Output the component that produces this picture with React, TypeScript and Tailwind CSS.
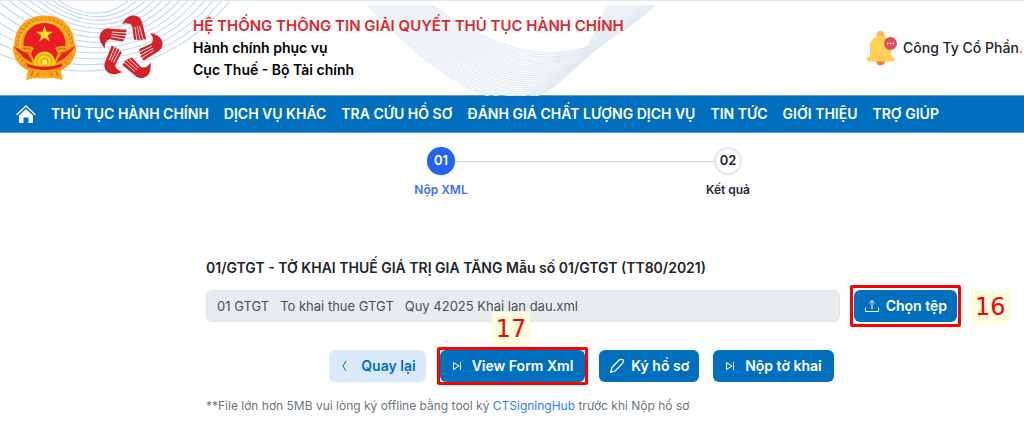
import { useState } from 'react';

const NAV_ITEMS = [
  'THỦ TỤC HÀNH CHÍNH',
  'DỊCH VỤ KHÁC',
  'TRA CỨU HỒ SƠ',
  'ĐÁNH GIÁ CHẤT LƯỢNG DỊCH VỤ',
  'TIN TỨC',
  'GIỚI THIỆU',
  'TRỢ GIÚP',
];

const PRIMARY_BTN =
  'flex h-8 items-center rounded-md bg-[#0070be] text-sm font-semibold text-white hover:bg-[#005fa3]';

const mix = (a: number[], b: number[], t: number) => a.map((v, i) => v + (b[i] - v) * t);
const toPath = (p: number[]) => `M${p[0]} ${p[1]}C${p.slice(2).join(' ')}`;

function Waves() {
  const left = Array.from({ length: 13 }, (_, i) =>
    toPath(mix([-10, 49, 60, 80, 158, 86, 230, 0], [-10, -85, 40, 6, 90, 30, 128, 0], i / 12)),
  );
  const right = Array.from({ length: 24 }, (_, i) =>
    toPath(mix([368, 4, 470, 112, 552, 148, 607, 4], [432, 4, 510, 60, 580, 75, 655, 4], i / 23)),
  );
  return (
    <svg className="absolute left-0 top-0" width="700" height="95" fill="none" aria-hidden="true">
      {left.map((d, i) => (
        <path key={i} d={d} stroke="#c3d8e8" strokeWidth="1.100" />
      ))}
      {right.map((d, i) => (
        <path key={i} d={d} stroke="#e3ebf3" strokeWidth="1.200" />
      ))}
    </svg>
  );
}

function Emblem() {
  const rays = Array.from({ length: 40 }, (_, i) => i * 9);
  return (
    <svg width="66" height="66" viewBox="0 0 66 66" aria-hidden="true">
      <path d="M17 48L14 65.500C20 62.500 25 63.500 32.500 63.500C40 63.500 45 62.500 50.500 65.500L48 48Z" fill="#fba919" />
      <path d="M32.500 0.500C14 0.500 4 13 3 25C2.500 29 1 31 1 35C2 45 9 53 16 55H49C56 53 63 45 64 35C64 31 62.500 29 62 25C61 13 51 0.500 32.500 0.500Z" fill="#f9a31a" />
      {rays.map((r) => (
        <path
          key={r}
          d="M32.500 2.500C34.500 3.500 34.500 5 33 7"
          stroke="#ef6a1b"
          strokeWidth="0.900"
          fill="none"
          transform={`rotate(${r} 32.500 31)`}
        />
      ))}
      <ellipse cx="32.500" cy="30" rx="24.500" ry="23.500" stroke="#ffd21f" strokeWidth="1.300" fill="none" />
      <ellipse cx="32.500" cy="28.500" rx="21" ry="20.500" fill="#ec1c24" />
      <path d="M32.500 10.500L34.500 16.800H41L35.800 20.500L37.800 26.500L32.500 22.800L27.200 26.500L29.200 20.500L24 16.800H30.500Z" fill="#ffe41c" />
      <path d="M8 33C13 30 19 31 22 33L19 38L23 48H42L46 38L43 33C46 31 52 30 57 33L50 50C44 54 21 54 15 50Z" fill="#f9a51a" />
      <path
        d="M11 34C14 33 17 33 19 35M12 38C14 37 16 37 18 39M14 42C16 41 18 42 20 44M54 34C51 33 48 33 46 35M53 38C51 37 49 37 47 39M51 42C49 41 47 42 45 44"
        stroke="#e8551d"
        strokeWidth="1.100"
        fill="none"
      />
      <path d="M1 31L16 39L21 48L12 43ZM64 31L49 39L44 48L53 43Z" fill="#e2241d" />
      <circle cx="32.500" cy="47" r="10.500" fill="#ffd91d" />
      <circle cx="32.500" cy="47" r="7.500" stroke="#f39a1b" strokeWidth="1.300" fill="none" />
      <circle cx="32.500" cy="47" r="3.500" stroke="#f39a1b" strokeWidth="1.300" fill="#ffef5a" />
      <path d="M14 48C25 53 40 53 51 48L47 57C38 60 27 60 18 57Z" fill="#f9a51a" />
      <path d="M14 48C25 53 40 53 51 48L49 52C38 56 27 56 16 52Z" fill="#e3221f" />
      <path d="M19 61L21 56M25 61L26 58M40 61L39 58M46 61L44 56" stroke="#e8551d" strokeWidth="1.200" />
    </svg>
  );
}

function HandsLogo() {
  return (
    <svg width="66" height="70" viewBox="-34 -36 68 72" aria-hidden="true">
      {[0, 72, 144, 216, 288].map((r) => (
        <g key={r} transform={`rotate(${r})`}>
          <path
            d="M-8.500 -24.500C-6.500 -27 -4 -32.500 2 -33.500C8 -34 11.500 -31 12.500 -26L16.500 -10C16.500 -8.500 15 -8 14 -9.500C13.500 -7.500 11 -7.500 10.500 -9C10 -7.500 7.500 -7.500 7 -9C6.500 -8 4.500 -8 4 -9.500L2.500 -21C2 -25.500 -3.500 -26.500 -8.500 -24.500Z"
            fill="#d2232a"
          />
          <path d="M5 -22L7 -8.500M7.500 -22.500L10.300 -8.500M10 -22.500L13.500 -8.500" stroke="#fff" strokeWidth="0.800" fill="none" />
        </g>
      ))}
    </svg>
  );
}

function Bell() {
  return (
    <svg width="31" height="35" viewBox="0 0 31 35" aria-hidden="true">
      <circle cx="14.500" cy="4" r="4" fill="#ffb74f" />
      <circle cx="14.500" cy="30" r="4.500" fill="#f0823c" />
      <path d="M14.500 5C7.500 5 4 10 4 16V24C4 26 0.500 26 0.500 28.500C0.500 30 1.500 30.500 2.500 30.500H26.500C27.500 30.500 28.500 30 28.500 28.500C28.500 26 25 26 25 24V16C25 10 21.500 5 14.500 5Z" fill="#ffd054" />
      <circle cx="24.500" cy="12.500" r="6.500" fill="#e54d5e" />
      <path d="M21 12.500H22.500M23.800 12.500H25.300M26.600 12.500H28" stroke="#fff" strokeWidth="1.300" />
    </svg>
  );
}

function HomeIcon() {
  return (
    <svg width="20" height="20" viewBox="0 0 20 20" aria-hidden="true">
      <path d="M1 10.500L10 2L19 10.500" stroke="#fff" strokeWidth="1.300" fill="none" strokeLinecap="round" />
      <path d="M10 5L17 11.500V17.500C17 18.500 16.500 19 15.500 19H12.500V13.500H7.500V19H4.500C3.500 19 3 18.500 3 17.500V11.500Z" fill="#fff" />
    </svg>
  );
}

function UploadIcon() {
  return (
    <svg width="16" height="16" viewBox="0 0 16 16" fill="none" stroke="currentColor" aria-hidden="true">
      <path d="M8 11V2.500M5 5.500L8 2.500L11 5.500M1.500 9.500V13.500H14.500V9.500" />
    </svg>
  );
}

function SkipIcon() {
  return (
    <svg width="10" height="10" viewBox="0 0 10 10" fill="none" stroke="currentColor" aria-hidden="true">
      <path d="M1.500 1.500L7 5L1.500 8.500ZM8.500 1V9" />
    </svg>
  );
}

function PenIcon() {
  return (
    <svg width="16" height="16" viewBox="0 0 16 16" fill="none" stroke="currentColor" strokeWidth="1.200" strokeLinejoin="round" aria-hidden="true">
      <path d="M1.500 14.500L3 9.500L9.500 2.500C11 1 15 1 14.500 3C14.500 4.500 13 6 12 7L6 13Z" />
    </svg>
  );
}

function Step({ no, label, active }: { no: string; label: string; active?: boolean }) {
  return (
    <li className="z-10 flex w-16 flex-col items-center gap-1">
      <span
        className={`flex h-7 w-7 items-center justify-center rounded-full text-[13px] font-semibold ${
          active ? 'bg-[#2563eb] text-white shadow-sm' : 'border-2 border-gray-200 bg-white text-gray-800'
        }`}
      >
        {no}
      </span>
      <span className={`text-xs leading-[22px] font-semibold ${active ? 'text-[#3f6fee]' : 'text-gray-800'}`}>{label}</span>
    </li>
  );
}

export default function App() {
  const [fileName] = useState('01 GTGT   To khai thue GTGT   Quy 42025 Khai lan dau.xml');

  return (
    <div className="overflow-hidden bg-white font-['Inter',sans-serif] text-[#212529]">
      <header className="relative flex h-[95px] items-center border-t border-gray-200">
        <Waves />
        <div className="relative flex flex-1 items-center pl-3">
          <Emblem />
          <div className="ml-[19px]">
            <HandsLogo />
          </div>
          <div className="ml-[30px] text-sm leading-[22px] font-semibold text-black">
            <h1 className="text-[15px] text-[#d9292f]">HỆ THỐNG THÔNG TIN GIẢI QUYẾT THỦ TỤC HÀNH CHÍNH</h1>
            <p>Hành chính phục vụ</p>
            <p>Cục Thuế - Bộ Tài chính</p>
          </div>
        </div>
        <a href="#account" className="relative flex w-[158px] items-center gap-1.5 text-sm font-medium whitespace-nowrap">
          <span className="shrink-0">
            <Bell />
          </span>
          <span>
            Công Ty Cổ Phần<span className="text-orange-400">.</span>
          </span>
        </a>
      </header>

      <nav className="flex h-[38px] items-center gap-[15px] border-y border-[#4f9dd6] bg-[#0070be] pl-4 text-sm font-semibold whitespace-nowrap text-white">
        <a href="#home" aria-label="Trang chủ">
          <HomeIcon />
        </a>
        {NAV_ITEMS.map((item) => (
          <a key={item} href="#menu">
            {item}
          </a>
        ))}
      </nav>

      <section className="pt-3.5 pr-[61px] pl-[206px]">
        <ol className="relative mx-auto flex w-[351px] justify-between">
          <li className="absolute top-3.5 right-8 left-8 h-px bg-gray-300" aria-hidden="true" />
          <Step no="01" label="Nộp XML" active />
          <Step no="02" label="Kết quả" />
        </ol>
      </section>

      <main className="pt-[55px] pr-[67px] pb-4 pl-[206px]">
        <h2 className="text-sm leading-6 font-semibold">01/GTGT - TỜ KHAI THUẾ GIÁ TRỊ GIA TĂNG Mẫu số 01/GTGT (TT80/2021)</h2>

        <div className="mt-2.5 flex gap-3.5">
          <input
            aria-label="Tệp tờ khai"
            readOnly
            value={fileName}
            className="h-8 min-w-0 flex-1 rounded-md border border-[#dee2e6] bg-[#e9ecef] px-2.5 text-[13px] text-[#495057] outline-none"
          />
          <div className="relative">
            <button type="button" className={`${PRIMARY_BTN} gap-1.5 px-2.5`}>
              <UploadIcon />
              Chọn tệp
            </button>
            <span className="pointer-events-none absolute -inset-x-1 -inset-y-[5px] rounded-xs border-3 border-[#ff0000]" />
            <span className="absolute top-0 left-full ml-3.5 bg-[#ffffe0] px-1 font-['DejaVu_Sans',sans-serif] text-2xl leading-[34px] text-[#ff0000]">16</span>
          </div>
        </div>

        <div className="mt-7 flex justify-center gap-3.5">
          <button type="button" className="flex h-8 items-center gap-3 rounded-md bg-[#dbeafa] px-2.5 text-sm font-semibold text-[#0070be]">
            <svg width="10" height="12" viewBox="0 0 10 12" fill="none" stroke="currentColor" aria-hidden="true">
              <path d="M7 1L4 6L7 11" />
            </svg>
            Quay lại
          </button>
          <div className="relative">
            <button type="button" className={`${PRIMARY_BTN} gap-2.5 px-3`}>
              <SkipIcon />
              View Form Xml
            </button>
            <span className="pointer-events-none absolute -inset-[3px] rounded-xs border-3 border-[#ff0000]" />
            <span className="absolute bottom-full left-[52px] mb-1 bg-[#ffffe0] px-1 font-['DejaVu_Sans',sans-serif] text-2xl leading-[34px] text-[#ff0000]">17</span>
          </div>
          <button type="button" className={`${PRIMARY_BTN} gap-1.5 px-2.5`}>
            <PenIcon />
            Ký hồ sơ
          </button>
          <button type="button" className={`${PRIMARY_BTN} gap-2.5 px-3`}>
            <SkipIcon />
            Nộp tờ khai
          </button>
        </div>

        <p className="mt-3.5 text-xs leading-5 text-[#6c757d]">
          **File lớn hơn 5MB vui lòng ký offline bằng tool ký{' '}
          <a href="#signing" className="text-[#2f7bff]">
            CTSigningHub
          </a>{' '}
          trước khi Nộp hồ sơ
        </p>
      </main>
    </div>
  );
}
